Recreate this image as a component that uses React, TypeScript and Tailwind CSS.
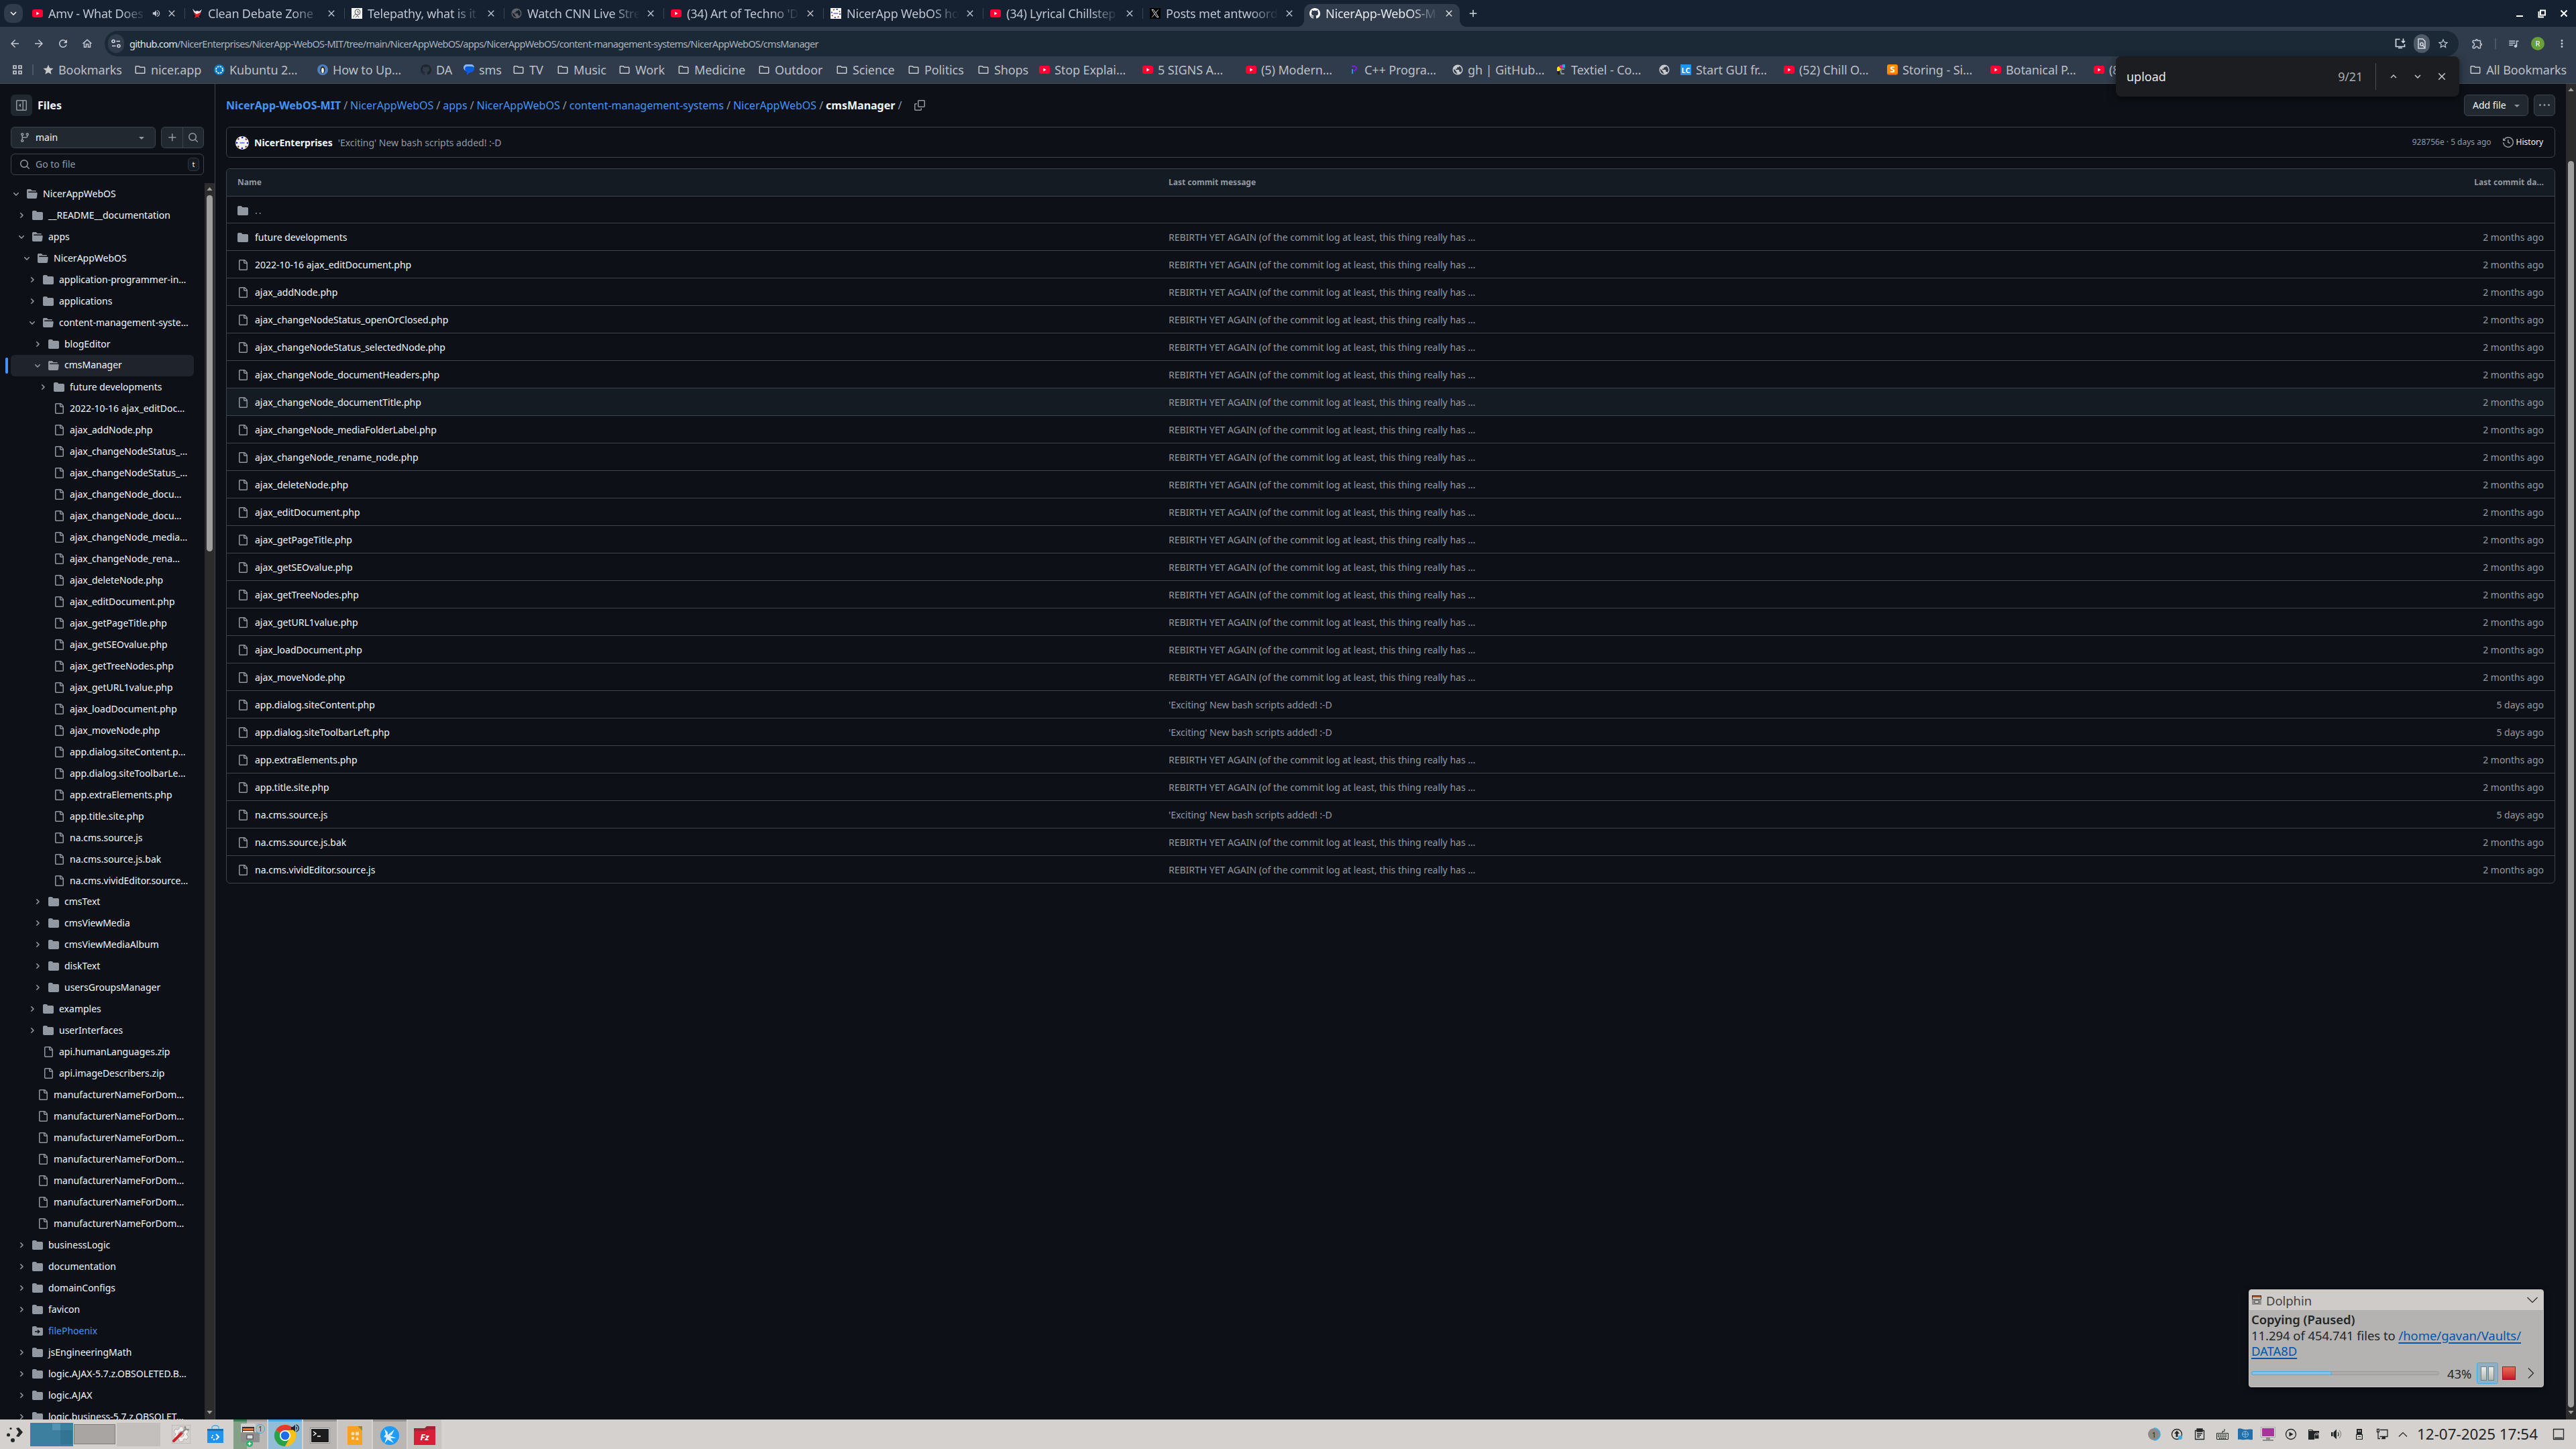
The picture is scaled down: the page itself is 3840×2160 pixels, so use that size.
import type { ReactNode } from "react";
import {
  MdAdd,
  MdArrowBack,
  MdArrowForward,
  MdClose,
  MdExpandLess,
  MdExpandMore,
  MdMoreVert,
  MdOutlineExtension,
  MdOutlineFolder,
  MdOutlineHome,
  MdPublic,
  MdQueueMusic,
  MdRefresh,
  MdSettings,
  MdStar,
  MdStarBorder,
  MdVolumeUp,
} from "react-icons/md";

const ICONS = {
  folder:
    "M1.75 1A1.75 1.75 0 0 0 0 2.75v10.5C0 14.216.784 15 1.75 15h12.5A1.75 1.75 0 0 0 16 13.25v-8.5A1.75 1.75 0 0 0 14.25 3H7.5a.25.25 0 0 1-.2-.1l-.9-1.2C6.07 1.26 5.55 1 5 1H1.75Z",
  folderOpen:
    "M.513 1.513A1.75 1.75 0 0 1 1.75 1h3.5c.55 0 1.07.26 1.4.7l.9 1.2a.25.25 0 0 0 .2.1H13a1 1 0 0 1 1 1v.5H2.75a.75.75 0 0 0 0 1.5h11.978a1 1 0 0 1 .994 1.117L15 13.25A1.75 1.75 0 0 1 13.25 15H1.75A1.75 1.75 0 0 1 0 13.25V2.75c0-.464.184-.91.513-1.237Z",
  file: "M2 1.75C2 .784 2.784 0 3.75 0h6.586c.464 0 .909.184 1.237.513l2.914 2.914c.329.328.513.773.513 1.237v9.586A1.75 1.75 0 0 1 13.25 16h-9.5A1.75 1.75 0 0 1 2 14.25Zm1.75-.25a.25.25 0 0 0-.25.25v12.5c0 .138.112.25.25.25h9.5a.25.25 0 0 0 .25-.25V6h-2.75A1.75 1.75 0 0 1 9 4.25V1.5Zm6.75.062V4.25c0 .138.112.25.25.25h2.688l-.011-.013-2.914-2.914-.013-.011Z",
  branch:
    "M9.5 3.25a2.25 2.25 0 1 1 3 2.122V6A2.5 2.5 0 0 1 10 8.5H6a1 1 0 0 0-1 1v1.128a2.251 2.251 0 1 1-1.5 0V5.372a2.25 2.25 0 1 1 1.5 0v1.836A2.493 2.493 0 0 1 6 7h4a1 1 0 0 0 1-1v-.628A2.25 2.25 0 0 1 9.5 3.25Zm-6 0a.75.75 0 1 0 1.5 0 .75.75 0 0 0-1.5 0Zm8.25-.75a.75.75 0 1 0 0 1.5.75.75 0 0 0 0-1.5ZM4.25 12a.75.75 0 1 0 0 1.5.75.75 0 0 0 0-1.5Z",
  search:
    "M10.68 11.74a6 6 0 0 1-7.922-8.982 6 6 0 0 1 8.982 7.922l3.04 3.04a.749.749 0 0 1-.326 1.275.749.749 0 0 1-.734-.215ZM11.5 7a4.499 4.499 0 1 0-8.997 0A4.499 4.499 0 0 0 11.5 7Z",
  plus: "M7.75 2a.75.75 0 0 1 .75.75V7h4.25a.75.75 0 0 1 0 1.5H8.5v4.25a.75.75 0 0 1-1.5 0V8.5H2.75a.75.75 0 0 1 0-1.5H7V2.75A.75.75 0 0 1 7.75 2Z",
  copy: "M0 6.75C0 5.784.784 5 1.75 5h1.5a.75.75 0 0 1 0 1.5h-1.5a.25.25 0 0 0-.25.25v7.5c0 .138.112.25.25.25h7.5a.25.25 0 0 0 .25-.25v-1.5a.75.75 0 0 1 1.5 0v1.5A1.75 1.75 0 0 1 9.25 16h-7.5A1.75 1.75 0 0 1 0 14.25ZM5 1.75C5 .784 5.784 0 6.75 0h7.5C15.216 0 16 .784 16 1.75v7.5A1.75 1.75 0 0 1 14.25 11h-7.5A1.75 1.75 0 0 1 5 9.25Zm1.75-.25a.25.25 0 0 0-.25.25v7.5c0 .138.112.25.25.25h7.5a.25.25 0 0 0 .25-.25v-7.5a.25.25 0 0 0-.25-.25Z",
  history:
    "m.427 1.927 1.215 1.215a8.002 8.002 0 1 1-1.6 5.685.75.75 0 1 1 1.493-.154 6.5 6.5 0 1 0 1.18-4.458l1.358 1.358A.25.25 0 0 1 3.896 6H.25A.25.25 0 0 1 0 5.75V2.104a.25.25 0 0 1 .427-.177ZM7.75 4a.75.75 0 0 1 .75.75v2.992l2.028.812a.75.75 0 0 1-.557 1.392l-2.5-1A.751.751 0 0 1 7 8.25v-3.5A.75.75 0 0 1 7.75 4Z",
  sidebar:
    "m4.177 7.823 2.396-2.396A.25.25 0 0 1 7 5.604v4.792a.25.25 0 0 1-.427.177L4.177 8.177a.25.25 0 0 1 0-.354ZM0 1.75C0 .784.784 0 1.75 0h12.5C15.216 0 16 .784 16 1.75v12.5A1.75 1.75 0 0 1 14.25 16H1.75A1.75 1.75 0 0 1 0 14.25Zm1.75-.25a.25.25 0 0 0-.25.25v12.5c0 .138.112.25.25.25H9.5v-13Zm12.5 13a.25.25 0 0 0 .25-.25V1.75a.25.25 0 0 0-.25-.25H11v13Z",
  caret:
    "m4.427 7.427 3.396 3.396a.25.25 0 0 0 .354 0l3.396-3.396A.25.25 0 0 0 11.396 7H4.604a.25.25 0 0 0-.177.427Z",
  kebab:
    "M8 9a1.5 1.5 0 1 0 0-3 1.5 1.5 0 0 0 0 3ZM1.5 9a1.5 1.5 0 1 0 0-3 1.5 1.5 0 0 0 0 3Zm13 0a1.5 1.5 0 1 0 0-3 1.5 1.5 0 0 0 0 3Z",
  github:
    "M8 0C3.58 0 0 3.58 0 8c0 3.54 2.29 6.53 5.47 7.59.4.07.55-.17.55-.38 0-.19-.01-.82-.01-1.49-2.01.37-2.53-.49-2.69-.94-.09-.23-.48-.94-.82-1.13-.28-.15-.68-.52-.01-.53.63-.01 1.08.58 1.23.82.72 1.21 1.87.87 2.33.66.07-.52.28-.87.51-1.07-1.78-.2-3.64-.89-3.64-3.95 0-.87.31-1.59.82-2.15-.08-.2-.36-1.02.08-2.12 0 0 .67-.21 2.2.82.64-.18 1.32-.27 2-.27s1.36.09 2 .27c1.53-1.04 2.2-.82 2.2-.82.44 1.1.16 1.92.08 2.12.51.56.82 1.27.82 2.15 0 3.07-1.87 3.75-3.65 3.95.29.25.54.73.54 1.48 0 1.07-.01 1.93-.01 2.2 0 .21.15.46.55.38A8.01 8.01 0 0 0 16 8c0-4.42-3.58-8-8-8Z",
};

const CHEVRON_RIGHT =
  "M4.7 10c-.2 0-.4-.1-.5-.2-.3-.3-.3-.8 0-1.1L6.9 6 4.2 3.3c-.3-.3-.3-.8 0-1.1.3-.3.8-.3 1.1 0l3.3 3.2c.3.3.3.8 0 1.1L5.3 9.7c-.2.2-.4.3-.6.3Z";
const CHEVRON_DOWN =
  "M6 8.825c-.2 0-.4-.1-.5-.2l-3.3-3.3c-.3-.3-.3-.8 0-1.1.3-.3.8-.3 1.1 0l2.7 2.7 2.7-2.7c.3-.3.8-.3 1.1 0 .3.3.3.8 0 1.1l-3.2 3.2c-.2.2-.4.3-.6.3Z";

function Octicon({ name, className = "size-4" }: { name: keyof typeof ICONS; className?: string }) {
  return (
    <svg viewBox="0 0 16 16" fill="currentColor" className={`shrink-0 ${className}`}>
      <path d={ICONS[name]} fillRule={name === "copy" ? "nonzero" : "evenodd"} />
    </svg>
  );
}

/* ---------- favicons ---------- */

type FavName =
  | "youtube"
  | "debate"
  | "page"
  | "globe"
  | "globeDim"
  | "nicer"
  | "x"
  | "github"
  | "githubDark"
  | "kubuntu"
  | "howto"
  | "sms"
  | "folder"
  | "star"
  | "cpp"
  | "textiel"
  | "lc"
  | "storing";

function Favicon({ name }: { name: FavName }) {
  switch (name) {
    case "youtube":
      return (
        <svg viewBox="0 0 16 16" className="size-4 shrink-0">
          <rect y="2" width="16" height="12" rx="3" fill="#ff0033" />
          <path d="M6.3 5.6v4.8L10.5 8z" fill="#fff" />
        </svg>
      );
    case "debate":
      return (
        <svg viewBox="0 0 16 16" className="size-4 shrink-0">
          <path d="M1 1l4 4 3-1 3 1 4-3-3 6-2 3-5-1-2-4z" fill="#f1e9e9" />
          <path d="M3 6l4 3 5-2 2-1-2 4-2 2 1 3-3-2-4 2 1-4z" fill="#d9242c" />
          <path d="M2 14l3-3M12 12l2 2" stroke="#111" strokeWidth="1.4" />
        </svg>
      );
    case "page":
      return (
        <svg viewBox="0 0 16 16" className="size-4 shrink-0">
          <rect width="16" height="16" fill="#f4f4f2" />
          <circle cx="9" cy="6" r="4" fill="none" stroke="#555" />
          <path d="M3 14c0-4 3-5 5-4M6 14l3-3 2 3M8 5h2v3" fill="none" stroke="#555" />
        </svg>
      );
    case "globe":
      return <MdPublic className="-m-px size-[18px] shrink-0 text-[#c7c9cc]" />;
    case "globeDim":
      return <MdPublic className="-m-px size-[18px] shrink-0 text-[#5f6368]" />;
    case "nicer":
      return (
        <svg viewBox="0 0 16 16" className="size-4 shrink-0">
          <rect width="16" height="16" fill="#fff" />
          <circle cx="8" cy="8" r="6.3" fill="none" stroke="#1d35b4" strokeWidth="2" strokeDasharray="2 7.9" />
          <circle cx="8" cy="8" r="6.3" fill="none" stroke="#a3443c" strokeWidth="1.8" strokeDasharray="2 7.9" strokeDashoffset="5" />
          <path d="M4.5 8h7" stroke="#8f96e8" strokeWidth="2" />
        </svg>
      );
    case "x":
      return (
        <svg viewBox="0 0 16 16" className="size-4 shrink-0">
          <rect width="16" height="16" fill="#000" />
          <path d="M3 2.5h2.6L13 13.5h-2.6zM12.6 2.5L8.8 7M7.2 9l-4 4.5" fill="none" stroke="#e7e7e7" />
        </svg>
      );
    case "github":
      return <Octicon name="github" className="size-4 text-white" />;
    case "githubDark":
      return <Octicon name="github" className="size-4 text-[#1f262f]" />;
    case "kubuntu":
      return (
        <svg viewBox="0 0 16 16" className="size-4 shrink-0">
          <circle cx="8" cy="8" r="8" fill="#0079c1" />
          <circle cx="8" cy="8" r="5" fill="none" stroke="#fff" strokeWidth="1.8" strokeDasharray="2.6 1.33" />
        </svg>
      );
    case "howto":
      return (
        <svg viewBox="0 0 16 16" className="size-4 shrink-0">
          <circle cx="8" cy="8" r="8" fill="#4c80c3" />
          <ellipse cx="8" cy="8.2" rx="3.6" ry="5.4" fill="#23262b" />
          <ellipse cx="8" cy="9" rx="1.9" ry="4" fill="#f5f3e4" />
          <path d="M7 5l1 1.3L9 5z" fill="#f2b632" />
        </svg>
      );
    case "sms":
      return (
        <svg viewBox="0 0 16 16" className="size-4 shrink-0">
          <path d="M1 6.5C1 3 3.5.5 7.5.5S16 3 16 6.5 13 12 9.5 12L5 16v-4.5C2.500 11 1 9 1 6.500z" fill="#0b5be0" />
          <path d="M0 5C0 2 2 0 5 0h6c3 0 5 2 5 5 0-1-2-2-5-2H5C3 3 1 6 3 9 1 8.500 0 7 0 5z" fill="#8ab4f8" />
        </svg>
      );
    case "folder":
      return <MdOutlineFolder className="size-[18px] shrink-0 text-[#c7c9cc]" />;
    case "star":
      return <MdStar className="-mr-px size-[18px] shrink-0 text-[#c7c9cc]" />;
    case "cpp":
      return (
        <svg viewBox="0 0 16 16" className="size-4 shrink-0">
          <path d="M4 3c4-1 7 0 7 3 0 2-2 2.500-4 4" fill="none" stroke="#7a1fe0" strokeWidth="2.400" />
          <path d="M5 7v7" stroke="#19a7e8" strokeWidth="1.800" />
        </svg>
      );
    case "textiel":
      return (
        <svg viewBox="0 0 16 16" className="size-4 shrink-0">
          <path d="M2 6c0-2 1.500-3 3-3l3 4-3 3H2z" fill="#ffe800" />
          <path d="M5 3c1-2 3-2.500 5-2v4L7 6z" fill="#ec1c8e" />
          <rect x="10" width="4" height="5" fill="#26a9e0" />
          <path d="M2 10h4v5H3z" fill="#1c1c1c" />
          <path d="M13 7H9c-2 1-2 5 0 7h4" fill="none" stroke="#8d9299" strokeWidth="2" />
        </svg>
      );
    case "lc":
      return (
        <span className="flex size-4 shrink-0 items-center justify-center bg-[#1e95ea] text-[11px] leading-none font-bold text-white">
          LC
        </span>
      );
    case "storing":
      return (
        <span className="flex size-4 shrink-0 items-center justify-center rounded-[3px] border-b-2 border-[#e2570a] bg-[#ff8b00] text-[13px] leading-none font-bold text-white">
          S
        </span>
      );
  }
}

/* ---------- browser chrome ---------- */

const TABS: { icon: FavName; title: string; audio?: boolean }[] = [
  { icon: "youtube", title: "Amv - What Does", audio: true },
  { icon: "debate", title: "Clean Debate Zone" },
  { icon: "page", title: "Telepathy, what is it" },
  { icon: "globeDim", title: "Watch CNN Live Stre" },
  { icon: "youtube", title: "(34) Art of Techno 'D" },
  { icon: "nicer", title: "NicerApp WebOS ho" },
  { icon: "youtube", title: "(34) Lyrical Chillstep" },
  { icon: "x", title: "Posts met antwoord" },
];

function TabTitle({ title, className }: { title: string; className: string }) {
  return (
    <span
      className={`ml-2 overflow-hidden text-[18px] leading-6 tracking-[-0.2px] whitespace-nowrap [mask-image:linear-gradient(to_right,#000_75%,transparent)] ${className}`}
    >
      {title}
    </span>
  );
}

function TabStrip() {
  return (
    <div className="flex h-10 items-center bg-[#152030] pl-1.5 text-[#bfc6d1]">
      <button className="flex size-7 items-center justify-center rounded-[10px] bg-[#303b4b]">
        <MdExpandMore className="size-[18px] text-white" />
      </button>
      <div className="ml-1 flex h-10">
        {TABS.map((tab, i) => (
          <div key={tab.title} className="flex w-[238px] items-center pl-2.5">
            <Favicon name={tab.icon} />
            <TabTitle title={tab.title} className={tab.audio ? "w-[146px]" : "w-[168px]"} />
            {tab.audio ? <MdVolumeUp className="ml-2 size-3.5" /> : null}
            <MdClose className="ml-auto size-4" />
            <span className={`ml-[11px] h-4 w-px ${i < 7 ? "bg-[#3a4656]" : ""}`} />
          </div>
        ))}
        <div className="relative mt-1.5 ml-0.5 flex w-[232px] items-center rounded-t-[10px] bg-[#303b4b] pb-1.5 pl-2 text-[#e4e7ec]">
          <span className="absolute bottom-0 -left-2.5 size-2.5 bg-[radial-gradient(circle_at_0_0,transparent_10px,#303b4b_10px)]" />
          <span className="absolute -right-2.5 bottom-0 size-2.5 bg-[radial-gradient(circle_at_100%_0,transparent_10px,#303b4b_10px)]" />
          <Favicon name="github" />
          <TabTitle title="NicerApp-WebOS-M" className="w-[168px]" />
          <MdClose className="mr-2 ml-auto size-4" />
        </div>
      </div>
      <MdAdd className="ml-[11px] size-[18px] text-[#d5dae2]" />
      <div className="mr-2.5 ml-auto flex items-center gap-[17px] text-white">
        <svg viewBox="0 0 16 16" className="size-4">
          <path d="M3 11h10v2H3z" fill="#fff" />
        </svg>
        <svg viewBox="0 0 16 16" className="size-4" fill="none" stroke="#fff" strokeWidth="2">
          <path d="M6 3.500h7v7H6zM3.500 5v8.500H11" />
        </svg>
        <svg viewBox="0 0 16 16" className="size-4" fill="none" stroke="#fff" strokeWidth="2">
          <path d="M3.500 3.500l9 9M12.500 3.500l-9 9" />
        </svg>
      </div>
    </div>
  );
}

function Toolbar() {
  return (
    <div className="flex h-[50px] items-center pl-[13px] text-[#c3cad6]">
      <div className="flex gap-[18px]">
        <MdArrowBack className="size-[18px]" />
        <MdArrowForward className="size-[18px]" />
        <MdRefresh className="size-[18px]" />
        <MdOutlineHome className="size-[18px]" />
      </div>
      <div className="ml-[17px] flex h-[38px] w-[3509px] items-center rounded-full bg-[#1b2836] pl-[5px]">
        <span className="flex h-7 w-6 items-center justify-center rounded-full bg-[#303b4b]">
          <svg viewBox="0 0 16 16" className="size-4" fill="none" stroke="#d5dae2" strokeWidth="1.600">
            <circle cx="4" cy="4.500" r="2" />
            <path d="M8.500 4.500H14M2 11.500h5.500" />
            <circle cx="12" cy="11.500" r="2" />
          </svg>
        </span>
        <span className="ml-2 text-[14.500px] leading-5 tracking-[-0.68px] whitespace-nowrap text-[#a9b2be]">
          <span className="text-[#dfe3e8]">github.com</span>
          /NicerEnterprises/NicerApp-WebOS-MIT/tree/main/NicerAppWebOS/apps/NicerAppWebOS/content-management-systems/NicerAppWebOS/cmsManager
        </span>
        <div className="mr-3.5 ml-auto flex items-center gap-[11px]">
          <svg viewBox="0 0 18 18" className="size-[18px]" fill="none" stroke="#d5dae2" strokeWidth="1.700">
            <path d="M8.500 2.500h-6v11h13V10M6 15.500h6M13.500 1.500v6M11 5l2.500 2.500L16 5" />
          </svg>
          <span className="flex h-7 w-6 items-center justify-center rounded-full bg-[#4f5b69]">
            <svg viewBox="0 0 16 16" className="size-4" fill="none" stroke="#d5dae2" strokeWidth="1.500">
              <path d="M3 1h6.500L13 4.500V15H3z" />
              <circle cx="8" cy="9" r="2.200" />
              <path d="M9.500 10.500l3 3.500" />
            </svg>
          </span>
          <MdStarBorder className="size-[18px]" />
        </div>
      </div>
      <MdOutlineExtension className="ml-[19px] size-[18px]" />
      <span className="ml-[17px] h-4 w-0.5 bg-[#4b5767]" />
      <MdQueueMusic className="ml-[17px] size-[18px]" />
      <span className="ml-[17px] flex size-5 items-center justify-center rounded-full bg-[#689f38] text-[11px] text-white">
        R
      </span>
      <MdMoreVert className="ml-[17px] size-[18px]" />
    </div>
  );
}

const BOOKMARKS: { icon: FavName; label: string; width: string }[] = [
  { icon: "star", label: "Bookmarks", width: "w-[137px]" },
  { icon: "folder", label: "nicer.app", width: "w-[119px]" },
  { icon: "kubuntu", label: "Kubuntu 2…", width: "w-[154px]" },
  { icon: "howto", label: "How to Up…", width: "w-[154px]" },
  { icon: "githubDark", label: "DA", width: "w-[64px]" },
  { icon: "sms", label: "sms", width: "w-[73px]" },
  { icon: "folder", label: "TV", width: "w-[66px]" },
  { icon: "folder", label: "Music", width: "w-[92px]" },
  { icon: "folder", label: "Work", width: "w-[88px]" },
  { icon: "folder", label: "Medicine", width: "w-[120px]" },
  { icon: "folder", label: "Outdoor", width: "w-[116px]" },
  { icon: "folder", label: "Science", width: "w-[107px]" },
  { icon: "folder", label: "Politics", width: "w-[104px]" },
  { icon: "folder", label: "Shops", width: "w-[92px]" },
  { icon: "youtube", label: "Stop Explai…", width: "w-[154px]" },
  { icon: "youtube", label: "5 SIGNS A…", width: "w-[154px]" },
  { icon: "youtube", label: "(5) Modern…", width: "w-[154px]" },
  { icon: "cpp", label: "C++ Progra…", width: "w-[154px]" },
  { icon: "globe", label: "gh | GitHub…", width: "w-[154px]" },
  { icon: "textiel", label: "Textiel - Co…", width: "w-[154px]" },
  { icon: "globe", label: "", width: "w-[32px]" },
  { icon: "lc", label: "Start GUI fr…", width: "w-[154px]" },
  { icon: "youtube", label: "(52) Chill O…", width: "w-[154px]" },
  { icon: "storing", label: "Storing - Si…", width: "w-[154px]" },
  { icon: "youtube", label: "Botanical P…", width: "w-[154px]" },
  { icon: "youtube", label: "(8", width: "w-[40px]" },
];

function BookmarksBar() {
  return (
    <div className="flex h-[34px] items-center pb-1.5 pl-[18px] text-[18px] leading-6 tracking-[-0.1px] text-[#bcc0c6]">
      <svg viewBox="0 0 16 16" className="size-4 shrink-0" fill="none" stroke="#c7c9cc" strokeWidth="1.700">
        <path d="M2 2h4v4H2zM10 2h4v4h-4zM2 10h4v4H2zM10 10h4v4h-4z" />
      </svg>
      <span className="mr-[13px] ml-3.5 h-4 w-0.5 bg-[#4b5767]" />
      {BOOKMARKS.map((b, i) => (
        <div key={i} className={`flex shrink-0 items-center gap-[7px] whitespace-nowrap ${b.width}`}>
          <Favicon name={b.icon} />
          <span>{b.label}</span>
        </div>
      ))}
      <div className="mr-3.5 ml-auto flex items-center gap-[7px]">
        <Favicon name="folder" />
        <span>All Bookmarks</span>
      </div>
    </div>
  );
}

function FindBar() {
  return (
    <div className="absolute top-[84px] left-[3154px] flex h-[60px] w-[512px] items-center rounded-lg bg-[#1b1d21] pr-4 pl-4 text-[18px] shadow-[0_4px_12px_rgba(0,0,0,0.5)]">
      <span className="text-[#e8eaed]">upload</span>
      <span className="mr-px ml-auto tracking-[-0.2px] text-[#a9adb3]">9/21</span>
      <span className="ml-[18px] h-10 w-px bg-[#4a4e54]" />
      <MdExpandLess className="ml-[17px] size-[18px] text-[#c7c9cc]" />
      <MdExpandMore className="ml-[18px] size-[18px] text-[#c7c9cc]" />
      <MdClose className="mr-px ml-[18px] size-[18px] text-[#c7c9cc]" />
    </div>
  );
}

/* ---------- file tree ---------- */

type TreeKind = "open" | "closed" | "file" | "submodule";
type TreeNode = [depth: number, kind: TreeKind, label: string];

const TREE: TreeNode[] = [
  [0, "open", "NicerAppWebOS"],
  [1, "closed", "__README__documentation"],
  [1, "open", "apps"],
  [2, "open", "NicerAppWebOS"],
  [3, "closed", "application-programmer-in…"],
  [3, "closed", "applications"],
  [3, "open", "content-management-syste…"],
  [4, "closed", "blogEditor"],
  [4, "open", "cmsManager"],
  [5, "closed", "future developments"],
  [5, "file", "2022-10-16 ajax_editDoc…"],
  [5, "file", "ajax_addNode.php"],
  [5, "file", "ajax_changeNodeStatus_…"],
  [5, "file", "ajax_changeNodeStatus_…"],
  [5, "file", "ajax_changeNode_docu…"],
  [5, "file", "ajax_changeNode_docu…"],
  [5, "file", "ajax_changeNode_media…"],
  [5, "file", "ajax_changeNode_rena…"],
  [5, "file", "ajax_deleteNode.php"],
  [5, "file", "ajax_editDocument.php"],
  [5, "file", "ajax_getPageTitle.php"],
  [5, "file", "ajax_getSEOvalue.php"],
  [5, "file", "ajax_getTreeNodes.php"],
  [5, "file", "ajax_getURL1value.php"],
  [5, "file", "ajax_loadDocument.php"],
  [5, "file", "ajax_moveNode.php"],
  [5, "file", "app.dialog.siteContent.p…"],
  [5, "file", "app.dialog.siteToolbarLe…"],
  [5, "file", "app.extraElements.php"],
  [5, "file", "app.title.site.php"],
  [5, "file", "na.cms.source.js"],
  [5, "file", "na.cms.source.js.bak"],
  [5, "file", "na.cms.vividEditor.source…"],
  [4, "closed", "cmsText"],
  [4, "closed", "cmsViewMedia"],
  [4, "closed", "cmsViewMediaAlbum"],
  [4, "closed", "diskText"],
  [4, "closed", "usersGroupsManager"],
  [3, "closed", "examples"],
  [3, "closed", "userInterfaces"],
  [3, "file", "api.humanLanguages.zip"],
  [3, "file", "api.imageDescribers.zip"],
  [2, "file", "manufacturerNameForDom…"],
  [2, "file", "manufacturerNameForDom…"],
  [2, "file", "manufacturerNameForDom…"],
  [2, "file", "manufacturerNameForDom…"],
  [2, "file", "manufacturerNameForDom…"],
  [2, "file", "manufacturerNameForDom…"],
  [2, "file", "manufacturerNameForDom…"],
  [1, "closed", "businessLogic"],
  [1, "closed", "documentation"],
  [1, "closed", "domainConfigs"],
  [1, "closed", "favicon"],
  [1, "submodule", "filePhoenix"],
  [1, "closed", "jsEngineeringMath"],
  [1, "closed", "logic.AJAX-5.7.z.OBSOLETED.B…"],
  [1, "closed", "logic.AJAX"],
  [1, "closed", "logic.business-5.7.z.OBSOLET…"],
];

const INDENT = ["pl-0", "pl-2", "pl-4", "pl-6", "pl-8", "pl-10"];

function TreeIcon({ kind }: { kind: TreeKind }) {
  if (kind === "submodule") {
    return (
      <svg viewBox="0 0 16 16" className="size-4 shrink-0">
        <path d={ICONS.folder} fill="#9198a1" />
        <path d="M4 9h6M8 6.500L10.800 9 8 11.500" fill="none" stroke="#0d1117" strokeWidth="1.500" />
      </svg>
    );
  }
  if (kind === "file") return <Octicon name="file" />;
  return <Octicon name={kind === "open" ? "folderOpen" : "folder"} />;
}

function TreeRow({ node: [depth, kind, label] }: { node: TreeNode }) {
  const selected = label === "cmsManager";
  return (
    <li className={`relative h-8 rounded-md ${selected ? "bg-[#1f232b]" : ""} ${label === "cmsText" ? "-mt-px" : ""}`}>
      {selected ? <span className="absolute top-1 -left-2 h-6 w-1 rounded-full bg-[#4493f8]" /> : null}
      <div className={`flex h-8 items-center ${INDENT[depth]}`}>
        <span className="flex w-4 justify-center">
          {kind === "open" || kind === "closed" ? (
            <svg viewBox="0 0 12 12" className="size-3" fill="#9198a1">
              <path d={kind === "open" ? CHEVRON_DOWN : CHEVRON_RIGHT} />
            </svg>
          ) : null}
        </span>
        <span className="mr-2 ml-2 text-[#9198a1]">
          <TreeIcon kind={kind} />
        </span>
        <span
          className={`text-[14px] leading-5 whitespace-nowrap ${kind === "submodule" ? "text-[#4493f8]" : "text-[#f0f6fc]"} ${selected ? "pb-0.5" : ""}`}
        >
          {label}
        </span>
      </div>
    </li>
  );
}

function ScrollArrow({ up = false }: { up?: boolean }) {
  return (
    <svg viewBox="0 0 10 6" className="h-[5px] w-[9px]" fill="#9f9f9f">
      <path d={up ? "M0 6l5-6 5 6z" : "M0 0l5 6 5-6z"} />
    </svg>
  );
}

function Sidebar() {
  return (
    <aside className="flex w-[321px] shrink-0 flex-col border-r border-[#3d444d]">
      <div className="flex items-center pt-4 pl-4">
        <span className="flex size-8 items-center justify-center rounded-md bg-[#212830] text-[#9198a1]">
          <Octicon name="sidebar" />
        </span>
        <h2 className="ml-2 text-[16px] leading-6 font-bold text-[#f0f6fc]">Files</h2>
      </div>
      <div className="mt-4 flex gap-2 px-4 text-[#9198a1]">
        <div className="flex h-8 w-[216px] items-center rounded-md border border-[#3d444d] bg-[#212830] pl-3">
          <Octicon name="branch" />
          <span className="ml-2 text-[14px] leading-5 text-[#f0f6fc]">main</span>
          <Octicon name="caret" className="mr-3 ml-auto size-4" />
        </div>
        <div className="flex h-8 w-16 rounded-md border border-[#3d444d] bg-[#212830]">
          <span className="flex w-8 items-center justify-center border-r border-[#3d444d]">
            <Octicon name="plus" />
          </span>
          <span className="flex flex-1 items-center justify-center">
            <Octicon name="search" />
          </span>
        </div>
      </div>
      <div className="mx-4 mt-2 flex h-8 w-[288px] items-center rounded-md border border-[#3d444d] pr-1.5 pl-3 text-[#9198a1]">
        <Octicon name="search" />
        <span className="ml-2 text-[14px] leading-5">Go to file</span>
        <kbd className="ml-auto flex h-5 w-[17px] items-center justify-center rounded-[5px] border border-[#2f3742] bg-[#151b23] font-['Noto_Sans'] text-[11px] text-[#f0f6fc]">
          t
        </kbd>
      </div>
      <div className="mt-3 flex min-h-0 flex-1">
        <ul className="ml-4 w-[273px]">
          {TREE.map((node, i) => (
            <TreeRow key={i} node={node} />
          ))}
        </ul>
        <div className="ml-4 flex w-[15px] flex-col items-center bg-[#2c2c2c] pt-1.5 pb-2">
          <ScrollArrow up />
          <span className="mt-[7px] h-[531px] w-[9px] rounded-full bg-[#9f9f9f]" />
          <span className="mt-auto">
            <ScrollArrow />
          </span>
        </div>
      </div>
    </aside>
  );
}

/* ---------- directory listing ---------- */

const REBIRTH = "REBIRTH YET AGAIN (of the commit log at least, this thing really has …";
const EXCITING = "'Exciting' New bash scripts added! :-D";

const FILES: { name: string; recent?: boolean }[] = [
  { name: "future developments" },
  { name: "2022-10-16 ajax_editDocument.php" },
  { name: "ajax_addNode.php" },
  { name: "ajax_changeNodeStatus_openOrClosed.php" },
  { name: "ajax_changeNodeStatus_selectedNode.php" },
  { name: "ajax_changeNode_documentHeaders.php" },
  { name: "ajax_changeNode_documentTitle.php" },
  { name: "ajax_changeNode_mediaFolderLabel.php" },
  { name: "ajax_changeNode_rename_node.php" },
  { name: "ajax_deleteNode.php" },
  { name: "ajax_editDocument.php" },
  { name: "ajax_getPageTitle.php" },
  { name: "ajax_getSEOvalue.php" },
  { name: "ajax_getTreeNodes.php" },
  { name: "ajax_getURL1value.php" },
  { name: "ajax_loadDocument.php" },
  { name: "ajax_moveNode.php" },
  { name: "app.dialog.siteContent.php", recent: true },
  { name: "app.dialog.siteToolbarLeft.php", recent: true },
  { name: "app.extraElements.php" },
  { name: "app.title.site.php" },
  { name: "na.cms.source.js", recent: true },
  { name: "na.cms.source.js.bak" },
  { name: "na.cms.vividEditor.source.js" },
];

const CRUMBS = ["NicerAppWebOS", "apps", "NicerAppWebOS", "content-management-systems", "NicerAppWebOS"];

function Slash() {
  return <span className="px-1 text-[#9198a1]">/</span>;
}

function Listing() {
  return (
    <div className="mt-4 overflow-hidden rounded-md border border-[#3d444d] text-[14px] leading-5">
      <div className="flex h-10 items-center bg-[#151b23] px-4 text-[12px] font-bold text-[#9198a1]">
        <span className="w-[1388px]">Name</span>
        <span>Last commit message</span>
        <span className="ml-auto tracking-[0.100px]">Last commit da...</span>
      </div>
      <div className="flex h-10 items-center border-t border-[#3d444d] px-4 pt-0.5 text-[#9198a1]">
        <Octicon name="folder" />
        <span className="ml-2.5 tracking-[2px]">..</span>
      </div>
      {FILES.map((file, i) => (
        <div
          key={file.name}
          className={`flex h-[41px] items-center border-t border-[#3d444d] px-4 pt-0.5 text-[#9198a1] ${i === 6 ? "bg-[#151b23]" : ""}`}
        >
          <Octicon name={i === 0 ? "folder" : "file"} />
          <span className="ml-2.5 w-[1362px] text-[#f0f6fc]">{file.name}</span>
          <span>{file.recent ? EXCITING : REBIRTH}</span>
          <span className="ml-auto">{file.recent ? "5 days ago" : "2 months ago"}</span>
        </div>
      ))}
    </div>
  );
}

function Main() {
  return (
    <main className="min-w-0 flex-1 pr-4 pl-4">
      <div className="mt-4 flex h-8 items-center text-[16px] leading-6 text-[#4493f8]">
        <span className="font-bold">NicerApp-WebOS-MIT</span>
        <Slash />
        {CRUMBS.map((c, i) => (
          <span key={i}>
            {c}
            <Slash />
          </span>
        ))}
        <span className="font-bold text-[#f0f6fc]">cmsManager</span>
        <Slash />
        <span className="ml-[15px] text-[#9198a1]">
          <Octicon name="copy" />
        </span>
        <div className="ml-auto flex h-8 w-24 items-center rounded-md border border-[#3d444d] bg-[#212830] pl-3 text-[14px] leading-5 text-[#f0f6fc]">
          <span className="whitespace-nowrap">Add file</span>
          <Octicon name="caret" className="mr-2 ml-auto size-4 text-[#9198a1]" />
        </div>
        <span className="ml-2 flex size-8 items-center justify-center rounded-md border border-[#3d444d] bg-[#212830] text-[#9198a1]">
          <Octicon name="kebab" />
        </span>
      </div>
      <div className="mt-4 flex h-[46px] items-center rounded-md border border-[#3d444d] pr-[17px] pl-[13px] text-[14px] leading-5">
        <svg viewBox="0 0 20 20" className="mt-0.5 size-5">
          <circle cx="10" cy="10" r="10" fill="#f2f2f2" />
          <circle cx="10" cy="10" r="8" fill="none" stroke="#1010a8" strokeWidth="2.400" strokeDasharray="2.400 10.160" strokeDashoffset="1.200" />
          <circle cx="10" cy="10" r="8" fill="none" stroke="#8a2020" strokeWidth="2" strokeDasharray="2.400 10.160" strokeDashoffset="7.500" />
          <path d="M6.500 10h7" stroke="#7c86f0" strokeWidth="2" />
        </svg>
        <span className="mt-0.5 ml-2 font-bold text-[#f0f6fc]">NicerEnterprises</span>
        <span className="mt-0.5 ml-2 text-[#9198a1]">{EXCITING}</span>
        <span className="ml-auto text-[12px] text-[#9198a1]">928756e · 5 days ago</span>
        <span className="ml-[17px] flex items-center gap-1 text-[12px] text-[#f0f6fc]">
          <Octicon name="history" className="size-4 text-[#9198a1]" />
          History
        </span>
      </div>
      <Listing />
    </main>
  );
}

function PageScrollbar() {
  return (
    <div className="flex w-[15px] flex-col items-center bg-[#2c2c2c] pt-1.5 pb-2">
      <ScrollArrow up />
      <span className="mt-[104px] h-[1858px] w-[9px] rounded-full bg-[#9f9f9f]" />
      <span className="mt-auto">
        <ScrollArrow />
      </span>
    </div>
  );
}

/* ---------- desktop ---------- */

function CopyNotification() {
  return (
    <div className="absolute top-[1922px] left-[3352px] h-[146px] w-[440px] overflow-hidden rounded border border-[#c6c3c1] bg-[#b5b3b1] text-[18.500px] leading-[23px] tracking-[-0.060px] text-[#232627] shadow-[0_2px_8px_rgba(0,0,0,0.6)]">
      <div className="flex h-[31px] items-center border-b border-[#b0adab] bg-[#cfcbc8] pr-2 pl-1">
        <svg viewBox="0 0 14 14" className="size-3.5">
          <rect width="14" height="6" fill="#3a2b22" />
          <path d="M1 1.500h12v2H1z" fill="#e8651a" />
          <path d="M1 3.500h12v1.500H1z" fill="#fff" />
          <rect y="5.500" width="14" height="8.500" rx="1" fill="#8f8f8f" />
          <rect x="4" y="8" width="6" height="3.500" fill="#e6e6e6" stroke="#555" />
        </svg>
        <span className="ml-[7px] text-[#3f4244]">Dolphin</span>
        <svg viewBox="0 0 16 10" className="ml-auto h-2.5 w-4" fill="none" stroke="#232627" strokeWidth="1.200">
          <path d="M.5 1L8 8.500 15.500 1" />
        </svg>
      </div>
      <div className="pt-px pl-[3px]">
        <p className="leading-6 font-semibold">Copying (Paused)</p>
        <p className="w-[430px]">
          11.294 of 454.741 files to{" "}
          <span className="text-[#0057ae] underline decoration-2 underline-offset-[3px]">
            /home/gavan/Vaults/
            <br />
            DATA8D
          </span>
        </p>
      </div>
      <div className="mt-1.5 flex h-8 items-center pl-[3px]">
        <div className="h-1.5 w-[280px] rounded-full border border-[#9b9997] bg-[#aeacaa]">
          <div className="-mt-px -ml-px h-1.5 w-[120px] rounded-full border border-[#3daee9] bg-[#8cc0e0]" />
        </div>
        <span className="ml-3 w-[38px]">43%</span>
        <span className="ml-1.5 flex size-8 items-center justify-center gap-0.5 rounded-[3px] border border-[#3daee9] bg-[#8fafc4]">
          <span className="h-[21px] w-[9px] border border-[#77807e] bg-linear-to-b from-[#eceeec] to-[#b4b8b2]" />
          <span className="h-[21px] w-[9px] border border-[#77807e] bg-linear-to-b from-[#eceeec] to-[#b4b8b2]" />
        </span>
        <span className="ml-1.5 size-5 border border-[#a01525] bg-linear-to-b from-[#ea6a55] to-[#c4152a]" />
        <svg viewBox="0 0 10 16" className="ml-[18px] h-4 w-2.5" fill="none" stroke="#232627" strokeWidth="1.200">
          <path d="M1 .5L8.500 8 1 15.500" />
        </svg>
      </div>
    </div>
  );
}

function Task({ active, bar, children }: { active: string; bar: string; children: ReactNode }) {
  return (
    <div className={`relative mr-0.5 flex h-11 w-[50px] items-center justify-center border-t-[3px] ${active} ${bar}`}>
      {children}
    </div>
  );
}

function Tasks() {
  return (
    <div className="flex">
      <Task
        active="bg-[linear-gradient(to_right,#84a188_20px,#bcb8b5_20px)]"
        bar="[border-image:linear-gradient(to_right,#3f7f55_40%,#9d9996_40%)_1]"
      >
        <svg viewBox="0 0 36 38" className="mb-1 h-[38px] w-9">
          <rect x="4" y="3" width="22" height="16" rx="1" fill="#cfcfcf" />
          <rect x="6" y="8" width="18" height="10" fill="#3b2a20" />
          <path d="M7 10h16v3H7z" fill="#f07022" />
          <path d="M7 14h16v2H7z" fill="#f6e6d6" />
          <rect x="4" y="16" width="28" height="15" rx="1.500" fill="#8e8e8e" />
          <rect x="13" y="20" width="9" height="6" fill="#ddd" stroke="#444" />
          <circle cx="17" cy="33" r="5" fill="#27b36a" />
          <path d="M17 30.500v5M14.500 33h5" stroke="#fff" strokeWidth="1.500" />
        </svg>
        <span className="absolute top-1 right-[3px] flex size-3.5 items-center justify-center rounded-full border border-[#3daee9] bg-[#bcb8b5] text-[10px] leading-none text-[#232627]">
          1
        </span>
      </Task>
      <Task active="bg-[#93bdd6]" bar="border-[#4aa9e0]">
        <svg viewBox="0 0 32 32" className="size-8">
          <circle cx="16" cy="16" r="16" fill="#fbc116" />
          <path d="M16 16L2.140 8A16 16 0 0 1 29.860 8H16z" fill="#e33b2e" />
          <path d="M2.140 8A16 16 0 0 0 16 32l6.930-12L16 16z" fill="#27a248" />
          <path d="M16 8h13.860A16 16 0 0 1 16 32l6.930-12z" fill="#fbc116" />
          <circle cx="16" cy="16" r="8" fill="#fff" />
          <circle cx="16" cy="16" r="6.300" fill="#1a6fe8" />
        </svg>
        <MdVolumeUp className="absolute top-0.5 right-0.5 size-4 text-[#232627]" />
      </Task>
      <Task active="bg-[#bab6b3]" bar="border-[#96928f]">
        <svg viewBox="0 0 30 24" className="h-6 w-[30px]">
          <rect x=".5" y=".5" width="29" height="23" fill="#1c1c1c" stroke="#8b8b8b" />
          <rect x="1.500" y="1.500" width="27" height="21" fill="none" stroke="#e5e5e5" />
          <path d="M5 6l4 3-4 3M11 13h5" fill="none" stroke="#fff" strokeWidth="1.500" />
        </svg>
      </Task>
      <Task active="bg-[#c8c4c1]" bar="border-[#c8c4c1]">
        <svg viewBox="0 0 22 28" className="h-7 w-[22px]">
          <path d="M0 0h15l7 7v21H0z" fill="#f6a323" />
          <path d="M15 0h7v7z" fill="#b0801e" />
          <circle cx="8" cy="11" r="2.500" fill="#fbe0ae" />
          <path d="M12 8.500h5v5h-5zM6 16h4v4H6zM14.500 15.500l2.500 5h-5z" fill="#fbe0ae" />
        </svg>
      </Task>
      <Task active="bg-[#bab6b3]" bar="border-[#96928f]">
        <svg viewBox="0 0 28 28" className="size-7">
          <circle cx="14" cy="14" r="14" fill="#1e9bf5" />
          <path d="M6 4l5 5v4l10-8-4 8-3 1 10 4-9 0 5 7-9-5-5 6 3-9-4-1 3-4z" fill="#dfeefb" />
        </svg>
      </Task>
      <Task active="bg-[#c8c4c1]" bar="border-[#c8c4c1]">
        <svg viewBox="0 0 32 28" className="h-7 w-8">
          <path d="M0 3h16l3-3h13v10H0z" fill="#a22333" />
          <path d="M0 7h17l3-2h12v23H0z" fill="#d81e38" />
        </svg>
        <span className="absolute inset-x-0 top-[17px] text-center text-[13px] leading-none font-bold text-white italic">Fz</span>
      </Task>
    </div>
  );
}

function Tray() {
  return (
    <div className="ml-auto flex items-center gap-4 text-[#232627]">
      <span className="relative flex size-[18px] items-center justify-center rounded-full bg-[#8e8a88] text-[11px] leading-none">
        1
        <svg viewBox="0 0 20 20" className="absolute -top-px -right-px size-5" fill="none" stroke="#3daee9" strokeWidth="1.800">
          <path d="M10 1a9 9 0 0 1 0 18" />
        </svg>
      </span>
      <svg viewBox="0 0 18 18" className="size-[18px]">
        <circle cx="9" cy="9" r="7.500" fill="none" stroke="#232627" strokeWidth="1.300" />
        <path d="M9 3.500l4 4.500h-2.500v5h-3V8H5z" fill="#232627" />
        <circle cx="14" cy="14" r="3" fill="#3daee9" />
      </svg>
      <svg viewBox="0 0 18 18" className="size-[18px]" fill="none" stroke="#232627" strokeWidth="1.300">
        <path d="M2.500 3.500h13v13h-13zM5 8h8M5 10.500h6M5 13h4" />
        <path d="M5 1h8v4H5z" fill="#232627" />
      </svg>
      <svg viewBox="0 0 18 18" className="size-[18px]" fill="none" stroke="#232627">
        <path d="M.5 7.500h17v9H.5zM9 7V4.500h3V1" />
        <path d="M2 10h14M2 12.500h14M4 15h10" strokeWidth="1.500" strokeDasharray="1.800 1" />
      </svg>
      <svg viewBox="0 0 22 18" className="-mx-0.5 h-[18px] w-[22px]">
        <path d="M0 1c4-2 6 1 11 1s7-1 11 0v15c-4 1-6-1-11 0s-7-1-11 0z" fill="#246fa8" />
        <circle cx="11" cy="9" r="4.500" fill="none" stroke="#8fc0e4" />
        <path d="M6.500 9h9M11 4.500v9" stroke="#8fc0e4" />
      </svg>
      <svg viewBox="0 0 22 22" className="-mx-0.5 size-[22px]">
        <rect x=".5" y=".5" width="21" height="15" fill="#e8e8e8" stroke="#a5a5a5" />
        <rect x="2" y="2" width="18" height="12" fill="#a5359b" />
        <path d="M8 16h6v3H8zM3 19h16v2H3z" fill="#8c8c8c" />
      </svg>
      <svg viewBox="0 0 18 18" className="size-[18px]">
        <circle cx="9" cy="9" r="7.500" fill="none" stroke="#232627" strokeWidth="1.300" />
        <path d="M6.500 5.500L12.500 9l-6 3.500z" fill="#232627" />
      </svg>
      <svg viewBox="0 0 18 18" className="size-[18px]">
        <path d="M1 2h6l1.500 2H17v4a4 4 0 0 0-7 3v6H1z" fill="#232627" />
        <path d="M10.500 10.500h6v5h-6z" fill="#232627" />
        <path d="M12 11V9.500a1.700 1.700 0 0 1 3.400 0V11" fill="none" stroke="#232627" strokeWidth="1.200" />
        <path d="M2 3.500h4.500" stroke="#d5d1ce" />
      </svg>
      <svg viewBox="0 0 18 18" className="size-[18px]">
        <path d="M1 6h2.500v6H1zM4.500 6L9 1.500v15L4.500 12z" fill="#232627" />
        <path d="M11 6c1.500 2 1.500 4 0 6" fill="none" stroke="#232627" strokeWidth="1.200" />
        <path d="M13 3c3.500 3.500 3.500 8.500 0 12" fill="none" stroke="#8f8b89" strokeWidth="1.200" />
      </svg>
      <svg viewBox="0 0 18 18" className="size-[18px]">
        <path d="M5 1h8v8H5z" fill="#232627" />
        <path d="M7 3h1.500v2.500H7zM9.500 3H11v2.500H9.500z" fill="#d5d1ce" />
        <path d="M4.600 9.500h8.800v7H4.600zM7 12.500h4" fill="none" stroke="#232627" strokeWidth="1.200" />
      </svg>
      <svg viewBox="0 0 18 18" className="size-[18px]" fill="none" stroke="#232627" strokeWidth="1.300">
        <path d="M6 2.500h11v10H5.500M1.500 1.500h3v4h-3zM3 5.500v10h3M8 15.500h6" />
        <path d="M9 13h5v3H9z" fill="#232627" stroke="none" />
      </svg>
      <svg viewBox="0 0 14 8" className="-ml-px h-2 w-3.5" fill="none" stroke="#232627" strokeWidth="1.200">
        <path d="M1 7.500l6-6 6 6" />
      </svg>
      <span className="-ml-0.5 w-[186px] text-[22.500px] leading-8 tracking-[-0.050px] whitespace-nowrap">12-07-2025 17:54</span>
      <svg viewBox="0 0 18 18" className="mr-[17px] size-[18px]" fill="none" stroke="#232627" strokeWidth="1.300">
        <path d="M1.500 1.500h15v15h-15zM3 14.500h12" />
      </svg>
    </div>
  );
}

function Taskbar() {
  return (
    <footer className="flex h-11 shrink-0 items-center bg-[#d5d1ce]">
      <svg viewBox="0 0 24 24" className="ml-2.5 size-6" fill="#232627">
        <circle cx="6" cy="3.500" r="1.600" />
        <circle cx="2.500" cy="13" r="2.500" />
        <circle cx="9" cy="21" r="3" />
        <path d="M14 3l4-1 6 7-6 7-4-1 4-6z" />
      </svg>
      <div className="ml-[11px] flex items-center">
        <div className="relative h-[35px] w-16 border border-[#3a82a3] bg-[#3d7f9e]">
          <span className="absolute top-0 left-8 h-2.5 w-3 bg-[#5494b2]" />
          <span className="absolute top-2.5 right-0 h-[21px] w-[18px] bg-[#347493]" />
        </div>
        <div className="ml-px h-[30px] w-[62px] border border-[#7f7b79] bg-[#a9a5a3]" />
        <div className="ml-0.5 h-[35px] w-[65px] bg-[#c3bfbd]" />
      </div>
      <div className="relative ml-[17px] size-7">
        <MdSettings className="size-7 text-[#f1efee] [stroke:#a8a4a2] [stroke-width:0.8px]" />
        <svg viewBox="0 0 28 28" className="absolute inset-0 size-7" fill="none">
          <path d="M3 24L15 12" stroke="#c9252b" strokeWidth="4" strokeLinecap="round" />
          <path d="M15 12l6-6M20 2c-1 4 2 6 6 5" stroke="#8f8f8f" strokeWidth="2.500" />
        </svg>
      </div>
      <svg viewBox="0 0 24 28" className="ml-[25px] h-7 w-6">
        <path d="M7 8V4c0-2 2-3 5-3s5 1 5 3v4" fill="none" stroke="#3daee9" strokeWidth="1.300" />
        <path d="M0 6h24v4H0z" fill="#1a6fa8" />
        <path d="M0 9h24v18H0z" fill="#1f93f0" />
        <path d="M13 14l4 4-4 4" fill="none" stroke="#fff" strokeWidth="2" />
        <circle cx="8" cy="16" r="1" fill="#fff" />
        <circle cx="7" cy="19" r="1.200" fill="#fff" />
        <circle cx="10" cy="22" r="1.200" fill="#fff" />
      </svg>
      <div className="ml-[15px]">
        <Tasks />
      </div>
      <Tray />
    </footer>
  );
}

export default function App() {
  return (
    <div className="relative flex h-[2160px] w-[3840px] flex-col overflow-hidden bg-[#0d1117] font-['Noto_Sans',sans-serif]">
      <TabStrip />
      <header className="h-[85px] shrink-0 border-b border-[#474c55] bg-[#303b4b]">
        <Toolbar />
        <BookmarksBar />
      </header>
      <div className="flex min-h-0 flex-1 overflow-hidden">
        <Sidebar />
        <Main />
        <PageScrollbar />
      </div>
      <Taskbar />
      <FindBar />
      <CopyNotification />
    </div>
  );
}
